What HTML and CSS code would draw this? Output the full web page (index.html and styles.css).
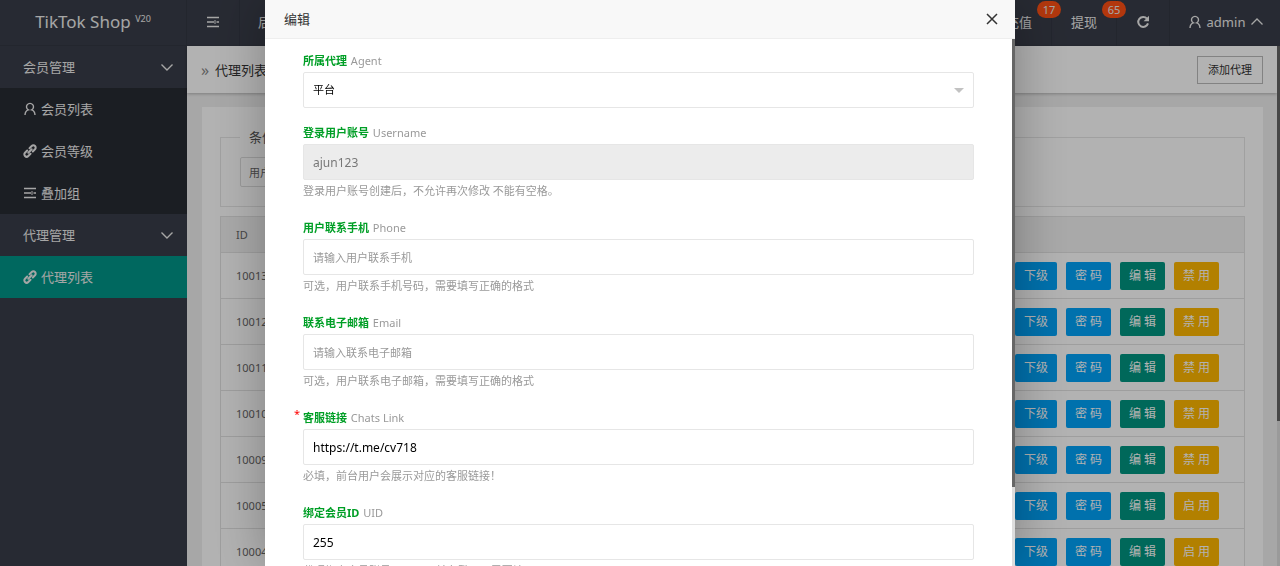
FILE: index.html
```html
<!DOCTYPE html>
<html lang="zh-CN">
<head>
<meta charset="utf-8">
<title>TikTok Shop</title>
<link rel="stylesheet" href="styles.css">
</head>
<body>
<svg class="defs" aria-hidden="true">
  <symbol id="i-menu" viewBox="0 0 14 14"><path d="M1 2.500h12M1 7h7M10.500 7H13M1 11.500h12" fill="none" stroke="currentColor" stroke-width="1.600"/><path d="M9 5v4" fill="none" stroke="currentColor" stroke-width="1"/></symbol>
  <symbol id="i-user" viewBox="0 0 14 14"><path d="M2 13c.2-3 1.600-4.600 3.300-5.100a3.500 3.500 0 1 1 3.400 0C10.400 8.400 11.800 10 12 13" fill="none" stroke="currentColor" stroke-width="1.400"/></symbol>
  <symbol id="i-link" viewBox="0 0 14 14"><g fill="none" stroke="currentColor" stroke-width="2" stroke-linecap="round"><path d="M5.300 8.700 8.700 5.300"/><path d="M6.500 4.200 8.700 2a2.300 2.300 0 0 1 3.300 3.300L9.800 7.500"/><path d="M7.500 9.800 5.300 12A2.300 2.300 0 0 1 2 8.700l2.200-2.200"/></g></symbol>
  <symbol id="i-down" viewBox="0 0 14 14"><path d="M1.500 4.500 7 10l5.500-5.500" fill="none" stroke="currentColor" stroke-width="1.400"/></symbol>
  <symbol id="i-up" viewBox="0 0 14 14"><path d="M1.500 9.500 7 4l5.500 5.500" fill="none" stroke="currentColor" stroke-width="1.300"/></symbol>
  <symbol id="i-refresh" viewBox="0 0 14 14"><path d="M11 3.600A5 5 0 1 0 12 8.400" fill="none" stroke="currentColor" stroke-width="2"/><path d="M13 .8v5.400H7.600z" fill="currentColor"/></symbol>
  <symbol id="i-close" viewBox="0 0 14 14"><path d="m2 2 10 10M12 2 2 12" fill="none" stroke="currentColor" stroke-width="1.500"/></symbol>
</svg>

<div class="app">
  <header class="topbar">
    <div class="logo">TikTok Shop <sup>V20</sup></div>
    <nav class="topnav">
      <button class="top-item" aria-label="菜单"><svg class="icon"><use href="#i-menu"/></svg></button>
      <a class="top-item" href="#">后台首页</a>
      <span class="spacer"></span>
      <a class="top-item counted" href="#">充值<span class="badge">17</span></a>
      <a class="top-item counted" href="#">提现<span class="badge">65</span></a>
      <button class="top-item" aria-label="刷新"><svg class="icon"><use href="#i-refresh"/></svg></button>
      <button class="top-item account"><svg class="icon"><use href="#i-user"/></svg>admin<svg class="icon"><use href="#i-up"/></svg></button>
    </nav>
  </header>

  <div class="main">
    <nav class="sidebar">
      <button class="group">会员管理<svg class="icon"><use href="#i-down"/></svg></button>
      <div class="children">
        <a class="child" href="#"><svg class="icon"><use href="#i-user"/></svg>会员列表</a>
        <a class="child" href="#"><svg class="icon"><use href="#i-link"/></svg>会员等级</a>
        <a class="child" href="#"><svg class="icon"><use href="#i-menu"/></svg>叠加组</a>
      </div>
      <button class="group">代理管理<svg class="icon"><use href="#i-down"/></svg></button>
      <div class="children">
        <a class="child active" href="#"><svg class="icon"><use href="#i-link"/></svg>代理列表</a>
      </div>
    </nav>

    <section class="content">
      <div class="crumbs">
        <span class="arrow">»</span><span>代理列表</span>
        <button class="add">添加代理</button>
      </div>
      <div class="card">
        <fieldset class="search">
          <legend>条件搜索</legend>
          <input class="search-input" type="text" placeholder="用户名" aria-label="用户名">
        </fieldset>
        <table class="grid">
          <thead><tr><th>ID</th><th></th></tr></thead>
          <tbody>
            <tr><td>10013</td><td class="ops"><div class="op-list"><button class="op blue">下级</button><button class="op blue">密 码</button><button class="op teal">编 辑</button><button class="op amber">禁 用</button></div></td></tr>
            <tr><td>10012</td><td class="ops"><div class="op-list"><button class="op blue">下级</button><button class="op blue">密 码</button><button class="op teal">编 辑</button><button class="op amber">禁 用</button></div></td></tr>
            <tr><td>10011</td><td class="ops"><div class="op-list"><button class="op blue">下级</button><button class="op blue">密 码</button><button class="op teal">编 辑</button><button class="op amber">禁 用</button></div></td></tr>
            <tr><td>10010</td><td class="ops"><div class="op-list"><button class="op blue">下级</button><button class="op blue">密 码</button><button class="op teal">编 辑</button><button class="op amber">禁 用</button></div></td></tr>
            <tr><td>10009</td><td class="ops"><div class="op-list"><button class="op blue">下级</button><button class="op blue">密 码</button><button class="op teal">编 辑</button><button class="op amber">禁 用</button></div></td></tr>
            <tr><td>10005</td><td class="ops"><div class="op-list"><button class="op blue">下级</button><button class="op blue">密 码</button><button class="op teal">编 辑</button><button class="op amber">启 用</button></div></td></tr>
            <tr><td>10004</td><td class="ops"><div class="op-list"><button class="op blue">下级</button><button class="op blue">密 码</button><button class="op teal">编 辑</button><button class="op amber">启 用</button></div></td></tr>
          </tbody>
        </table>
      </div>
    </section>
    <div class="page-scroll"></div>
  </div>
</div>

<div class="shade">
  <div class="dialog" role="dialog" aria-labelledby="dialog-title">
    <div class="dialog-head">
      <span id="dialog-title">编辑</span>
      <button class="close" aria-label="关闭"><svg class="icon"><use href="#i-close"/></svg></button>
    </div>
    <div class="dialog-body">
      <form class="form">
        <div class="field">
          <label for="agent"><b>所属代理</b> Agent</label>
          <div class="select"><select id="agent"><option>平台</option></select></div>
        </div>
        <div class="field">
          <label for="username"><b>登录用户账号</b> Username</label>
          <input id="username" type="text" value="ajun123" disabled>
          <p class="help">登录用户账号创建后，不允许再次修改 不能有空格。</p>
        </div>
        <div class="field">
          <label for="phone"><b>用户联系手机</b> Phone</label>
          <input id="phone" type="text" placeholder="请输入用户联系手机">
          <p class="help">可选，用户联系手机号码，需要填写正确的格式</p>
        </div>
        <div class="field">
          <label for="email"><b>联系电子邮箱</b> Email</label>
          <input id="email" type="text" placeholder="请输入联系电子邮箱">
          <p class="help">可选，用户联系电子邮箱，需要填写正确的格式</p>
        </div>
        <div class="field">
          <label class="required" for="chats"><b>客服链接</b> Chats Link</label>
          <input id="chats" type="text" value="https://t.me/cv718">
          <p class="help">必填，前台用户会展示对应的客服链接！</p>
        </div>
        <div class="field">
          <label for="uid"><b>绑定会员ID</b> UID</label>
          <input id="uid" type="text" value="255">
          <p class="help">代理绑定会员账号ID，用于前台登录，需要填写！</p>
        </div>
      </form>
      <div class="dialog-scroll"></div>
    </div>
  </div>
</div>
</body>
</html>
```
FILE: styles.css
```css
* { box-sizing: border-box; }
body {
  margin: 0;
  height: 100vh;
  overflow: hidden;
  font: 13px/22px "Noto Sans", "Noto Sans CJK SC", sans-serif;
  color: #333;
}
button, input, select { font: inherit; color: inherit; margin: 0; }
button { border: 0; padding: 0; background: none; cursor: pointer; }
a { color: inherit; text-decoration: none; }
.defs { display: none; }
.icon { width: 14px; height: 14px; flex: none; }

.app { height: 100vh; display: flex; flex-direction: column; overflow: hidden; }
.topbar { display: flex; flex: none; height: 46px; background: #393d49; color: #eee; }
.logo {
  width: 187px;
  border-right: 1px solid #333743;
  text-align: center;
  font-size: 17px;
  line-height: 44px;
  border-bottom: 1px solid #333743;
}
.logo sup { font-size: 9px; line-height: 9px; vertical-align: 6px; }
.topnav { flex: 1; display: flex; }
.top-item {
  display: flex;
  align-items: center;
  justify-content: center;
  gap: 4px;
  min-width: 53px;
  padding: 0 18px 2px;
  border-right: 1px solid #333743;
  white-space: nowrap;
}
.spacer { flex: 1; }
.counted { width: 65px; position: relative; }
.badge {
  position: absolute;
  top: 1px;
  left: 50px;
  min-width: 24px;
  height: 17px;
  border-radius: 9px;
  background: #ff5014;
  font-size: 11px;
  line-height: 17px;
  text-align: center;
  z-index: 1;
}
.account { width: 110px; padding: 0 8px 2px 10px; border: 0; gap: 5px; }

.main { flex: 1; min-height: 0; display: flex; }
.sidebar { width: 187px; flex: none; background: #393d49; color: #eee; }
.group {
  width: 100%;
  height: 42px;
  padding: 0 13px 0 23px;
  display: flex;
  align-items: center;
  justify-content: space-between;
}
.children { background: #282b33; }
.child { display: flex; align-items: center; gap: 4px; height: 42px; padding-left: 23px; }
.child.active { background: #009688; }

.content { flex: 1; min-width: 0; background: #f0f0f0; }
.crumbs {
  display: flex;
  align-items: center;
  height: 47px;
  padding: 0 14px;
  background: #fff;
  box-shadow: 0 1px 3px rgba(0, 0, 0, .25);
}
.arrow { width: 14px; color: #888; font-size: 16px; }
.add { margin-left: auto; width: 66px; height: 28px; border: 1px solid #bbb; font-size: 11px; }
.card { margin: 14px 14px 0 15px; padding: 19px 18px; background: #fff; min-height: 600px; }
.search { margin: 0 0 9px; padding: 9px 19px 19px; border: 1px solid #e6e6e6; min-width: 0; }
.search legend { padding: 0 9px; color: #555; }
.search-input { display: block; width: 190px; height: 30px; padding: 0 8px; border: 1px solid #ddd; border-radius: 2px; background: #fff; font-size: 11px; }
.search-input::placeholder { color: #666; }
.grid { width: 100%; border: 1px solid #e2e2e2; border-collapse: collapse; color: #666; font-size: 11px; }
.grid th, .grid td { padding: 0 15px; border-bottom: 1px solid #e2e2e2; text-align: left; font-weight: 400; }
.grid th { height: 36px; background: #f2f2f2; }
.grid td { height: 46px; }
.grid td.ops { padding-right: 25px; }
.op-list { display: flex; justify-content: flex-end; gap: 9px; }
.op { width: 45px; height: 28px; border-radius: 2px; color: #fff; font-size: 12px; }
.op:first-child { width: 42px; }
.blue { background: #00a2f8; }
.teal { background: #009682; }
.amber { background: #ffb800; }
.page-scroll { width: 3px; flex: none; background: linear-gradient(#666 375px, #ddd 375px); }

.shade {
  position: fixed;
  inset: 0;
  z-index: 10;
  display: flex;
  justify-content: center;
  background: rgba(0, 0, 0, .3);
}
.dialog {
  width: 750px;
  max-width: 100%;
  height: 100%;
  display: flex;
  flex-direction: column;
  background: #fff;
  box-shadow: 1px 1px 50px rgba(0, 0, 0, .3);
}
.dialog-head {
  flex: none;
  display: flex;
  align-items: center;
  justify-content: space-between;
  height: 39px;
  padding: 0 16px 0 19px;
  background: #f8f8f8;
  border-bottom: 1px solid #eee;
}
.close { display: flex; color: #333; }
.dialog-body { flex: 1; min-height: 0; display: flex; overflow: hidden; }
.form { flex: 1; padding: 11px 38px; font-size: 11px; }
.dialog-scroll { width: 3px; background: linear-gradient(#666 448px, #ddd 448px); }
.field { margin-bottom: 14px; }
.field label { display: block; color: #999; line-height: 20px; padding: 1px 0; position: relative; }
.field b { color: #009f26; margin-right: 1px; }
.required::before { content: "*"; position: absolute; left: -9px; top: -3px; color: #f00; }
.field input, .field select {
  display: block;
  width: 100%;
  height: 36px;
  padding: 0 9px;
  border: 1px solid #e6e6e6;
  border-radius: 2px;
  background: #fff;
  color: #000;
}
.field input { font-size: 12px; }
.field select { appearance: none; }
.field input:disabled { background: #ececec; color: #777; }
.field input::placeholder { color: #999; font-size: 11px; }
.select { position: relative; }
.select::after {
  content: "";
  position: absolute;
  right: 10px;
  top: 16px;
  border: 5px solid transparent;
  border-top-color: #c2c2c2;
  border-bottom: 0;
}
.help { margin: 0; padding-bottom: 2px; line-height: 21px; color: #999; }
```
